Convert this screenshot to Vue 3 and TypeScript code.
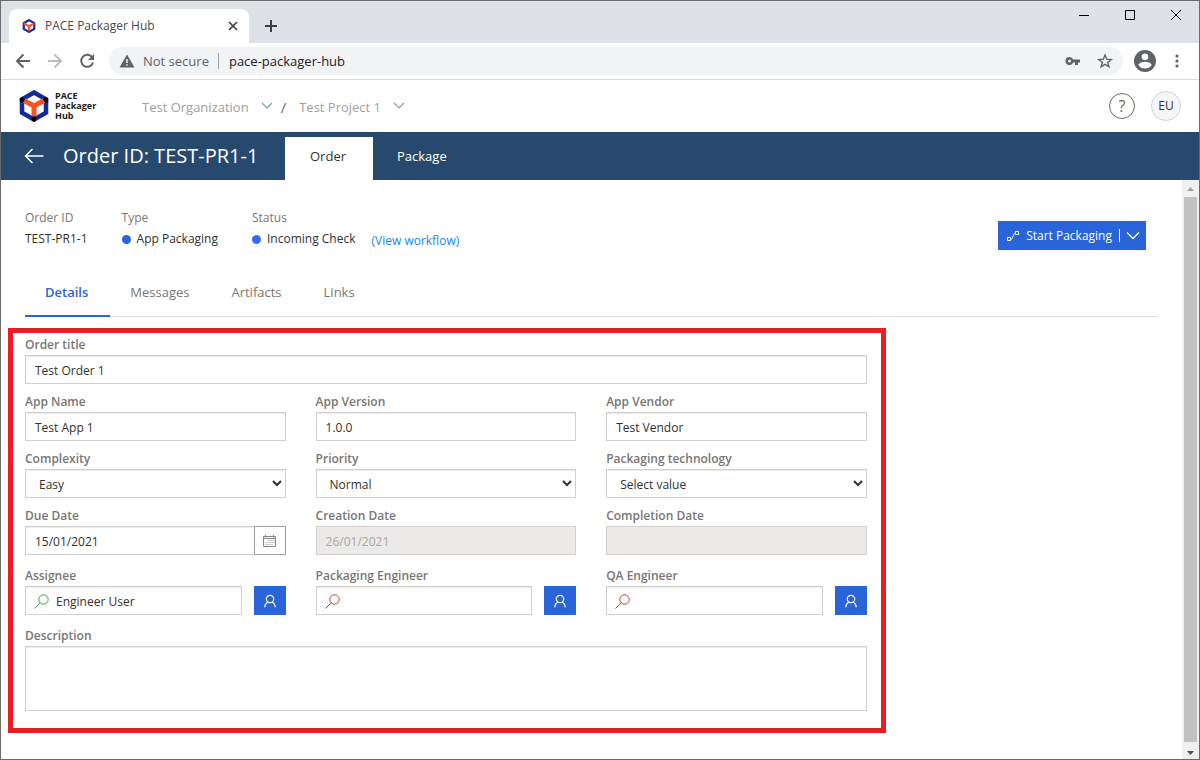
<script setup lang="ts">
import { ref } from 'vue'

interface Meta { label: string; value: string; dot?: string }
interface Person { id: string; label: string; value: string }

const metas: Meta[] = [
  { label: 'Order ID', value: 'TEST-PR1-1' },
  { label: 'Type', value: 'App Packaging', dot: 'type' },
  { label: 'Status', value: 'Incoming Check', dot: 'status' },
]
const sections = ['Details', 'Messages', 'Artifacts', 'Links']
const activeSection = ref('Details')

const texts = ref([
  { id: 'app-name', label: 'App Name', value: 'Test App 1' },
  { id: 'app-version', label: 'App Version', value: '1.0.0' },
  { id: 'app-vendor', label: 'App Vendor', value: 'Test Vendor' },
])
const choices = ref([
  { id: 'complexity', label: 'Complexity', value: 'Easy', options: ['Easy', 'Medium', 'Complex'] },
  { id: 'priority', label: 'Priority', value: 'Normal', options: ['Low', 'Normal', 'High'] },
  { id: 'technology', label: 'Packaging technology', value: 'Select value', options: ['Select value', 'MSI', 'App-V', 'MSIX'] },
])
const people = ref<Person[]>([
  { id: 'assignee', label: 'Assignee', value: 'Engineer User' },
  { id: 'engineer', label: 'Packaging Engineer', value: '' },
  { id: 'qa', label: 'QA Engineer', value: '' },
])
const title = ref('Test Order 1')
const dueDate = ref('15/01/2021')
const description = ref('')
</script>

<template>
  <div class="window">
    <div class="tabstrip">
      <div class="browser-tab">
        <svg class="favicon" viewBox="0 0 30 32" aria-hidden="true">
          <path d="M15 2.5 27 9.2v13.6L15 29.5 3 22.8V9.2z" fill="#fff" stroke="#15289c" stroke-width="5" />
          <path d="M3 10l12 6.5L27 10M15 16v12" fill="none" stroke="#ff5126" stroke-width="5" />
        </svg>
        <span class="browser-title">PACE Packager Hub</span>
        <button class="plain" aria-label="Close tab">
          <svg width="10" height="10" viewBox="0 0 10 10"><path d="M1 1l8 8M9 1L1 9" stroke="#3c4043" stroke-width="1.7" /></svg>
        </button>
      </div>
      <button class="plain new-tab" aria-label="New tab">
        <svg width="12" height="12" viewBox="0 0 12 12"><path d="M6 0v12M0 6h12" stroke="#3c4043" stroke-width="2" /></svg>
      </button>
      <div class="window-buttons">
        <button class="plain" aria-label="Minimize"><svg width="12" height="12" viewBox="0 0 12 12"><path d="M1 6.5h10" stroke="#000" /></svg></button>
        <button class="plain" aria-label="Maximize"><svg width="12" height="12" viewBox="0 0 12 12"><path d="M1.5 1.5h9v9h-9z" fill="none" stroke="#000" /></svg></button>
        <button class="plain" aria-label="Close"><svg width="12" height="12" viewBox="0 0 12 12"><path d="M1 1l10 10M11 1L1 11" stroke="#000" /></svg></button>
      </div>
    </div>

    <div class="toolbar">
      <button class="plain" aria-label="Back"><svg width="16" height="16" viewBox="0 0 16 16" fill="none" stroke="#5f6368" stroke-width="2"><path d="M15 8H2M8.5 1.5L2 8l6.5 6.5" /></svg></button>
      <button class="plain" aria-label="Forward"><svg width="16" height="16" viewBox="0 0 16 16" fill="none" stroke="#babcbe" stroke-width="2"><path d="M1 8h13M7.500 1.500L14 8l-6.500 6.500" /></svg></button>
      <button class="plain" aria-label="Reload"><svg width="16" height="16" viewBox="0 0 16 16"><path d="M13.300 4.600A6 6 0 1 0 14 9.500" fill="none" stroke="#5f6368" stroke-width="2" /><path d="M15 1v6H9z" fill="#5f6368" /></svg></button>
      <div class="address">
        <svg width="16" height="16" viewBox="0 0 16 16" aria-hidden="true"><path d="M8 1.500 15.500 14.500H.5z" fill="#5f6368" /><path d="M8 6v4M8 11.200v1.600" stroke="#f1f3f4" stroke-width="1.500" /></svg>
        <span class="insecure">Not secure</span>
        <input class="url" aria-label="Address" value="pace-packager-hub" />
        <svg class="key" width="16" height="16" viewBox="0 0 16 16" aria-hidden="true"><path d="M4.500 4a4 4 0 1 0 3.700 5.400H10V12h3V9.400h2V6.600H8.200A4 4 0 0 0 4.500 4z" fill="#5f6368" /><circle cx="4.500" cy="8" r="1.500" fill="#f1f3f4" /></svg>
        <svg width="16" height="16" viewBox="0 0 16 16" aria-hidden="true"><path d="M8 2l1.700 4.200 4.500.3-3.500 2.900 1.200 4.400L8 11.400l-3.900 2.400 1.200-4.400L1.800 6.500l4.500-.3z" fill="none" stroke="#5f6368" stroke-width="1.400" /></svg>
      </div>
      <button class="plain profile" aria-label="Profile"><svg width="22" height="22" viewBox="0 0 22 22"><circle cx="11" cy="11" r="11" fill="#5f6368" /><circle cx="11" cy="6.800" r="3.300" fill="#fff" /><path d="M4.300 15c1-2.300 4-3.200 6.700-3.200s5.700.9 6.700 3.200c-1.500 2.300-4 3.600-6.700 3.600S5.800 17.300 4.300 15z" fill="#fff" /></svg></button>
      <button class="plain" aria-label="Menu"><svg width="4" height="16" viewBox="0 0 4 16" fill="#5f6368"><circle cx="2" cy="3" r="1.600" /><circle cx="2" cy="8" r="1.600" /><circle cx="2" cy="13" r="1.600" /></svg></button>
    </div>

    <header class="app-header">
      <a class="brand" href="#">
        <svg width="30" height="32" viewBox="0 0 30 32" aria-hidden="true">
          <path d="M15 2.500 27 9.200v13.600L15 29.500 3 22.800V9.200z" fill="#fff" stroke="#15289c" stroke-width="4.500" />
          <path d="M5 10.500 15 16l10-5.500M15 15.500v11" fill="none" stroke="#ff5126" stroke-width="5" />
          <path d="M.8 8.200 3.500 7l2.500 2.200L4.500 12 .8 12.500zM29.200 8.200 26.500 7 24 9.200l1.500 2.800 3.700.5zM12.700 26.500h4.600v4.200L15 32l-2.300-1.300z" fill="#050505" />
        </svg>
        <span class="brand-name">PACE<br />Packager<br />Hub</span>
      </a>
      <nav class="crumbs" aria-label="Breadcrumb">
        <button class="plain crumb">Test Organization
          <svg width="12" height="8" viewBox="0 0 12 8"><path d="M1 1l5 5 5-5" fill="none" stroke="#60a5ab" stroke-width="1.100" /></svg>
        </button>
        <span class="slash">/</span>
        <button class="plain crumb">Test Project 1
          <svg width="12" height="8" viewBox="0 0 12 8"><path d="M1 1l5 5 5-5" fill="none" stroke="#8c9a9c" stroke-width="1.100" /></svg>
        </button>
      </nav>
      <button class="help" aria-label="Help">?</button>
      <button class="avatar" aria-label="Account">EU</button>
    </header>

    <div class="order-bar">
      <div class="order-head">
        <button class="plain" aria-label="Back to orders"><svg width="20" height="16" viewBox="0 0 20 16"><path d="M19.500 8H1.500M8.500 1l-7 7 7 7" fill="none" stroke="#fff" stroke-width="1.500" /></svg></button>
        <h1>Order ID: TEST-PR1-1</h1>
      </div>
      <a class="order-tab current" href="#order">Order</a>
      <a class="order-tab" href="#package">Package</a>
    </div>

    <div class="body">
      <main>
        <div class="summary">
          <dl>
            <div v-for="meta in metas" :key="meta.label" class="meta">
              <dt>{{ meta.label }}</dt>
              <dd><span v-if="meta.dot" class="dot" :class="meta.dot"></span>{{ meta.value }}</dd>
            </div>
          </dl>
          <a class="workflow" href="#workflow">(View workflow)</a>
          <div class="start">
            <button class="plain start-main">
              <svg width="14" height="12" viewBox="0 0 14 12" fill="none" stroke="#fff"><path d="M1.500 7.500h3v3h-3zM9.500 1.500h3v3h-3zM4.500 9.500c3 0 2-6.500 5-6.500" /></svg>
              Start Packaging
            </button>
            <button class="plain start-more" aria-label="More actions">
              <svg width="14" height="9" viewBox="0 0 14 9"><path d="M1 1.500l6 6 6-6" fill="none" stroke="#fff" stroke-width="1.300" /></svg>
            </button>
          </div>
        </div>

        <nav class="sections" aria-label="Order sections">
          <button v-for="name in sections" :key="name" class="plain section" :class="{ active: name === activeSection }" @click="activeSection = name">{{ name }}</button>
        </nav>

        <form class="details" @submit.prevent>
          <div class="field">
            <label for="title">Order title</label>
            <input id="title" v-model="title" class="control" type="text" />
          </div>
          <div class="row">
            <div v-for="item in texts" :key="item.id" class="field">
              <label :for="item.id">{{ item.label }}</label>
              <input :id="item.id" v-model="item.value" class="control" type="text" />
            </div>
          </div>
          <div class="row">
            <div v-for="item in choices" :key="item.id" class="field">
              <label :for="item.id">{{ item.label }}</label>
              <select :id="item.id" v-model="item.value" class="control">
                <option v-for="option in item.options" :key="option">{{ option }}</option>
              </select>
            </div>
          </div>
          <div class="row">
            <div class="field">
              <label for="due">Due Date</label>
              <div class="date">
                <input id="due" v-model="dueDate" class="control" type="text" />
                <button type="button" class="calendar" aria-label="Choose date">
                  <svg width="13" height="12" viewBox="0 0 13 12"><path d="M.5 1.500h12v10H.5zM.5 3.500h12M2.500 0v2.500M10.500 0v2.500" fill="none" stroke="#8a847f" /><path d="M4.500 5.500h7M2.500 7.500h9M2.500 9.500h7" stroke="#a19b96" stroke-dasharray="1 1" /></svg>
                </button>
              </div>
            </div>
            <div class="field">
              <label for="created">Creation Date</label>
              <input id="created" class="control" type="text" value="26/01/2021" disabled />
            </div>
            <div class="field">
              <label for="completed">Completion Date</label>
              <input id="completed" class="control" type="text" value="" disabled />
            </div>
          </div>
          <div class="row spaced">
            <div v-for="person in people" :key="person.id" class="field">
              <label :for="person.id">{{ person.label }}</label>
              <div class="person">
                <div class="control lookup" :class="{ found: person.value }">
                  <svg width="15" height="15" viewBox="0 0 15 15" fill="none" stroke="currentColor" aria-hidden="true"><circle cx="9.500" cy="5.500" r="4.700" /><path d="M6.200 8.800L.5 14.500" /></svg>
                  <input :id="person.id" v-model="person.value" type="text" />
                </div>
                <button type="button" class="pick" :aria-label="'Assign me as ' + person.label">
                  <svg width="14" height="14" viewBox="0 0 14 14" fill="none" stroke="#fff" stroke-width="1.200"><circle cx="7" cy="5" r="3.700" /><path d="M1.700 13.200c.2-2.500 1.400-4.400 3.300-5.200M12.300 13.200c-.2-2.500-1.400-4.400-3.300-5.200" /></svg>
                </button>
              </div>
            </div>
          </div>
          <div class="field spaced">
            <label for="description">Description</label>
            <textarea id="description" v-model="description" class="control area"></textarea>
          </div>
        </form>
      </main>
      <div class="scrollbar" aria-hidden="true">
        <svg width="17" height="17" viewBox="0 0 17 17"><path d="M5 11h7L8.500 7z" fill="#a3a3a3" /></svg>
        <div class="thumb"></div>
        <svg width="17" height="17" viewBox="0 0 17 17"><path d="M5 9h7l-3.500 4z" fill="#505050" /></svg>
      </div>
    </div>
  </div>
</template>

<style>
body { margin: 0; }
</style>

<style scoped>
* { box-sizing: border-box; }
.window {
  display: flex;
  flex-direction: column;
  min-height: 100vh;
  border: 1px solid #6b6b6b;
  background: #fff;
  color: #323130;
  font-family: "Open Sans", "Noto Sans", sans-serif;
  font-size: 12px;
  line-height: 18px;
}
button, input, select, textarea { font: inherit; color: inherit; }
svg { flex: none; display: block; }
a { text-decoration: none; }
.plain {
  display: flex;
  align-items: center;
  padding: 0;
  border: 0;
  background: none;
  white-space: nowrap;
}

.tabstrip { display: flex; height: 42px; padding-left: 8px; background: #dee1e6; }
.browser-tab {
  display: flex;
  align-items: center;
  width: 240px;
  height: 34px;
  margin-top: 8px;
  padding: 0 11px 0 13px;
  border-radius: 8px 8px 0 0;
  background: #fff;
}
.favicon { width: 14px; height: 14px; margin-right: 9px; }
.browser-title { flex: 1; color: #45494d; }
.new-tab { margin: 8px 0 0 16px; }
.window-buttons { display: flex; gap: 34px; height: 28px; margin-left: auto; padding-right: 17px; }

.toolbar {
  display: flex;
  align-items: center;
  gap: 16px;
  height: 37px;
  padding: 0 20px 0 14px;
  border-bottom: 1px solid #dadce0;
}
.address {
  display: flex;
  flex: 1;
  align-items: center;
  height: 28px;
  margin-left: -2px;
  padding: 0 10px;
  border-radius: 14px;
  background: #f1f3f4;
  font-size: 13px;
}
.insecure { margin-left: 8px; padding-right: 9px; border-right: 1px solid #9aa0a6; color: #5f6368; line-height: 16px; }
.url { flex: 1; min-width: 0; padding: 0 0 0 10px; border: 0; background: none; color: #202124; }
.key { margin-right: 16px; }
.profile { margin: 0 3px 0 -5px; }

.app-header { display: flex; align-items: center; height: 52px; padding: 0 18px; }
.brand { display: flex; align-items: center; gap: 6px; width: 123px; color: #1b1b1b; }
.brand-name { font-size: 9px; font-weight: 700; line-height: 10px; }
.crumbs { display: flex; flex: 1; align-items: center; gap: 8px; padding-top: 2px; font-size: 13px; }
.crumb { gap: 12px; color: #a19f9d; }
.crumb svg { margin-bottom: 2px; }
.slash { margin-right: 5px; color: #6b6b6b; font-size: 15px; }
.help, .avatar { padding: 0; border-radius: 50%; }
.help { width: 26px; height: 26px; border: 1px solid #6b6764; background: #fff; color: #6b6764; font-size: 16px; line-height: 24px; }
.avatar { width: 30px; height: 30px; margin-left: 16px; border: 1px solid #d2d2d4; background: #f5f6f8; }

.order-bar { display: flex; align-items: stretch; height: 48px; padding-top: 5px; background: #27496d; color: #fff; }
.order-head { display: flex; align-items: center; gap: 19px; width: 284px; padding: 0 0 6px 23px; }
h1 { margin: 0; font-size: 20px; font-weight: 400; line-height: 28px; white-space: nowrap; }
.order-tab { padding: 10px 24px 0; color: #fff; font-size: 13px; font-weight: 500; }
.order-tab.current { padding: 10px 27px 0 25px; background: #fff; color: #323130; }

.body { display: flex; flex: 1; }
main { flex: 1; min-width: 0; padding-top: 28px; }
.summary { display: flex; margin-right: 36px; padding-left: 24px; }
dl { display: flex; gap: 34px; margin: 0; padding-top: 1px; }
dt { margin-bottom: 3px; color: #797673; }
dd { display: flex; align-items: center; margin: 0; white-space: nowrap; }
.dot { width: 9px; height: 9px; margin-right: 6px; border-radius: 50%; background: #2964d8; }
.dot.status { background: #2e71f0; }
.workflow { margin: 24px 0 0 16px; color: #1684f8; }
.start { display: flex; align-items: center; height: 29px; margin: 13px 0 0 auto; background: #2964d8; color: #fff; }
.start-main { gap: 6px; padding: 0 7px 0 8px; }
.start-more { height: 13px; padding: 0 6px; border-left: 1px solid #fff; }

.sections { display: flex; margin: 19px 24px 0; border-bottom: 1px solid #dcdfe5; }
.section { height: 48px; margin-bottom: -1px; padding: 0 22px 0 20px; border-bottom: 2px solid transparent; color: #797673; font-size: 13px; }
.section.active { border-color: #2964d8; color: #2964d8; font-weight: 600; }

.details { width: calc(75% - 8px); margin: 11px 0 20px 7px; padding: 3px 14px 17px 12px; border: 5px solid #ed1c24; }
.row { display: grid; grid-template-columns: repeat(3, minmax(0, 1fr)); gap: 30px; margin-top: 9px; }
.spaced { margin-top: 12px; }
.field { display: flex; flex-direction: column; gap: 1px; }
label { color: #797673; font-weight: 600; }
.control {
  width: 100%;
  height: 29px;
  margin: 0;
  padding: 2px 9px 0;
  border: 1px solid #d2d0ce;
  border-radius: 0;
  outline: 0;
  background: #fff;
  box-shadow: inset 0 1px 0 #ececec;
}
select.control { padding: 2px 0 0 9px; }
.control:disabled { background: #ebeae9; color: #a8a6a4; }
.area { display: block; height: 65px; padding: 6px 9px; resize: none; }
.date, .person { display: flex; }
.calendar { display: grid; place-items: center; flex: none; width: 32px; margin-left: -1px; padding: 0; border: 1px solid #a19f9d; background: #fff; }
.person { gap: 12px; }
.lookup { display: flex; flex: 1; align-items: center; gap: 7px; min-width: 0; padding-left: 8px; color: #d13438; }
.lookup.found { color: #449b48; }
.lookup input { flex: 1; min-width: 0; padding: 0; border: 0; outline: 0; background: none; color: #323130; }
.pick { display: grid; place-items: center; flex: none; width: 32px; padding: 0; border: 0; background: #2964d8; }

.scrollbar { display: flex; flex-direction: column; width: 17px; background: #f0f0f0; }
.thumb { flex: 1; margin: 0 2px; background: #c1c1c1; }
</style>
